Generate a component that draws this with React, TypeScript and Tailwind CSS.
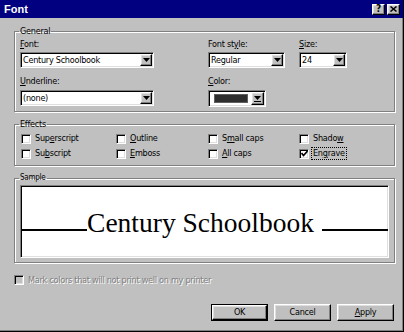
import React from 'react'

// Win98 style "Font" dialog

const sunken =
  'border border-t-[#808080] border-l-[#808080] border-b-white border-r-white shadow-[inset_1px_1px_0_#000,inset_-1px_-1px_0_#dfdfdf]'
const raised =
  'border border-t-white border-l-white border-b-black border-r-black shadow-[inset_-1px_-1px_0_#808080,inset_1px_1px_0_#dfdfdf]'
const etched = 'border border-[#808080] shadow-[1px_1px_0_#fff,inset_1px_1px_0_#fff]'

function U({ children }: { children: React.ReactNode }) {
  return <span className="underline decoration-1 underline-offset-[1px]">{children}</span>
}

function DownArrow() {
  return (
    <svg width="7" height="4" viewBox="0 0 7 4" className="block">
      <polygon points="0,0 7,0 3.5,4" fill="#000" />
    </svg>
  )
}

function ArrowButton() {
  return (
    <div className={`w-[12px] h-full bg-[#c0c0c0] ${raised} flex items-center justify-center`}>
      <DownArrow />
    </div>
  )
}

function Combo({ value, className }: { value: string; className: string }) {
  return (
    <div className={`flex h-[16px] bg-white ${sunken} p-[1px] ${className}`}>
      <span className="flex-1 pl-[1px] leading-[12px] whitespace-nowrap overflow-hidden">{value}</span>
      <ArrowButton />
    </div>
  )
}

function ColorCombo() {
  return (
    <div className={`flex h-[17px] w-[58px] bg-white ${sunken} p-[1px]`}>
      <div className="flex-1 flex items-center pl-[4px]">
        <div className="w-[34px] h-[9px] bg-[#2e2e2e] border border-[#606060]" />
      </div>
      <div className={`w-[13px] h-full bg-[#c0c0c0] ${raised} flex flex-col items-center justify-center gap-[1px]`}>
        <DownArrow />
        <div className="w-[7px] h-[1px] bg-black" />
      </div>
    </div>
  )
}

function CheckBox({ checked = false, disabled = false }: { checked?: boolean; disabled?: boolean }) {
  return (
    <div
      className={`w-[10px] h-[10px] ${disabled ? 'bg-[#c0c0c0]' : 'bg-white'} ${sunken} flex items-center justify-center shrink-0`}
    >
      {checked && (
        <svg width="7" height="7" viewBox="0 0 7 7" className="block">
          <polyline points="0.5,3 2.5,5.5 6.5,1" fill="none" stroke="#000" strokeWidth="1.6" />
        </svg>
      )}
    </div>
  )
}

function Effect({
  label,
  checked,
  focus,
}: {
  label: React.ReactNode
  checked?: boolean
  focus?: boolean
}) {
  return (
    <div className="flex items-center h-[15px]">
      <CheckBox checked={checked} />
      <span
        className={`ml-[2px] leading-[11px] px-[1px] ${
          focus ? 'border border-dotted border-black' : 'border border-transparent'
        }`}
      >
        {label}
      </span>
    </div>
  )
}

function Button({ children, isDefault }: { children: React.ReactNode; isDefault?: boolean }) {
  return (
    <div className={`w-[57px] h-[17px] ${isDefault ? 'border border-black' : ''}`}>
      <div className={`w-full h-full bg-[#c0c0c0] ${raised} flex items-center justify-center leading-none`}>
        {children}
      </div>
    </div>
  )
}

function TitleButton({ children }: { children: React.ReactNode }) {
  return (
    <div
      className={`w-[13px] h-[11px] bg-[#c0c0c0] ${raised} flex items-center justify-center text-[10px] font-bold leading-none text-black`}
    >
      {children}
    </div>
  )
}

export default function App() {
  return (
    <div className="w-[404px] h-[332px] bg-[#c0c0c0] flex flex-col border-r border-b border-black shadow-[inset_-1px_-1px_0_#808080] font-['DejaVu_Sans',sans-serif] font-stretch-condensed text-[9px] tracking-[-0.25px] text-black overflow-hidden">
      {/* title bar */}
      <div className="h-[18px] bg-[#000080] flex items-center pl-[4px] pr-[3px] shrink-0">
        <span className="flex-1 text-white font-bold text-[11px] leading-none tracking-normal font-['Liberation_Sans',Arial,sans-serif]">
          Font
        </span>
        <div className="flex gap-[2px]">
          <TitleButton>?</TitleButton>
          <TitleButton>
            <svg width="7" height="6" viewBox="0 0 7 6" className="block">
              <path d="M0.5 0.5 L6.5 5.5 M6.5 0.5 L0.5 5.5" stroke="#000" strokeWidth="1.5" />
            </svg>
          </TitleButton>
        </div>
      </div>

      <div className="flex flex-col pl-[14px] pr-[8px]">
        {/* General */}
        <fieldset className={`mt-[7px] ${etched} px-[5px] pb-[4px]`}>
          <legend className="px-[1px] -ml-[1px] leading-[12px]">General</legend>
          <div className="grid grid-cols-[188px_91px_1fr]">
            <div className="flex flex-col">
              <span className="leading-[12px] mt-[1px]">
                <U>F</U>ont:
              </span>
              <Combo value="Century Schoolbook" className="w-[134px] mt-[2px]" />
              <span className="leading-[12px] mt-[7px]">
                <U>U</U>nderline:
              </span>
              <Combo value="(none)" className="w-[134px] mt-[3px]" />
            </div>
            <div className="flex flex-col">
              <span className="leading-[12px] mt-[1px]">
                Font st<U>y</U>le:
              </span>
              <Combo value="Regular" className="w-[77px] mt-[2px]" />
              <span className="leading-[12px] mt-[7px]">
                <U>C</U>olor:
              </span>
              <div className="mt-[3px]">
                <ColorCombo />
              </div>
            </div>
            <div className="flex flex-col">
              <span className="leading-[12px] mt-[1px]">
                <U>S</U>ize:
              </span>
              <Combo value="24" className="w-[48px] mt-[2px]" />
            </div>
          </div>
        </fieldset>

        {/* Effects */}
        <fieldset className={`mt-[6px] ${etched} pl-[6px] pr-[5px] pb-[4px]`}>
          <legend className="px-[1px] -ml-[2px] leading-[12px]">Effects</legend>
          <div className="grid grid-cols-[95px_92px_91px_1fr] mt-[1px]">
            <Effect label={<>Sup<U>e</U>rscript</>} />
            <Effect label={<><U>O</U>utline</>} />
            <Effect label={<>S<U>m</U>all caps</>} />
            <Effect label={<>Shado<U>w</U></>} />
            <Effect label={<>Su<U>b</U>script</>} />
            <Effect label={<><U>E</U>mboss</>} />
            <Effect label={<><U>A</U>ll caps</>} />
            <Effect label={<>En<U>g</U>rave</>} checked focus />
          </div>
        </fieldset>

        {/* Sample */}
        <fieldset className={`mt-[6px] ${etched} px-[5px] pb-[4px]`}>
          <legend className="px-[1px] -ml-[1px] leading-[12px] text-[8px]">Sample</legend>
          <div className={`h-[73px] mt-[1px] bg-white ${sunken} flex items-center`}>
            <div className="flex-1 flex items-end mt-[2px]">
              <div className="flex-1 h-[2px] bg-black mb-[5px]" />
              <span className="font-['Liberation_Serif','Times_New_Roman',serif] font-stretch-normal tracking-normal text-[27.5px] leading-none whitespace-nowrap">
                Century Schoolbook
              </span>
              <div className="w-[8px]" />
              <div className="flex-1 h-[2px] bg-black mb-[5px]" />
            </div>
          </div>
        </fieldset>

        {/* printer option */}
        <div className="flex items-center mt-[11px] h-[12px]">
          <CheckBox disabled />
          <span className="ml-[4px] leading-[12px] text-[#808080] [text-shadow:1px_1px_0_#fff]">
            Mark colors that will not print well on my printer
          </span>
        </div>

        {/* buttons */}
        <div className="flex justify-end gap-[6px] mt-[18px] mr-[1px]">
          <Button isDefault>OK</Button>
          <Button>Cancel</Button>
          <Button>
            <U>A</U>pply
          </Button>
        </div>
      </div>
    </div>
  )
}
